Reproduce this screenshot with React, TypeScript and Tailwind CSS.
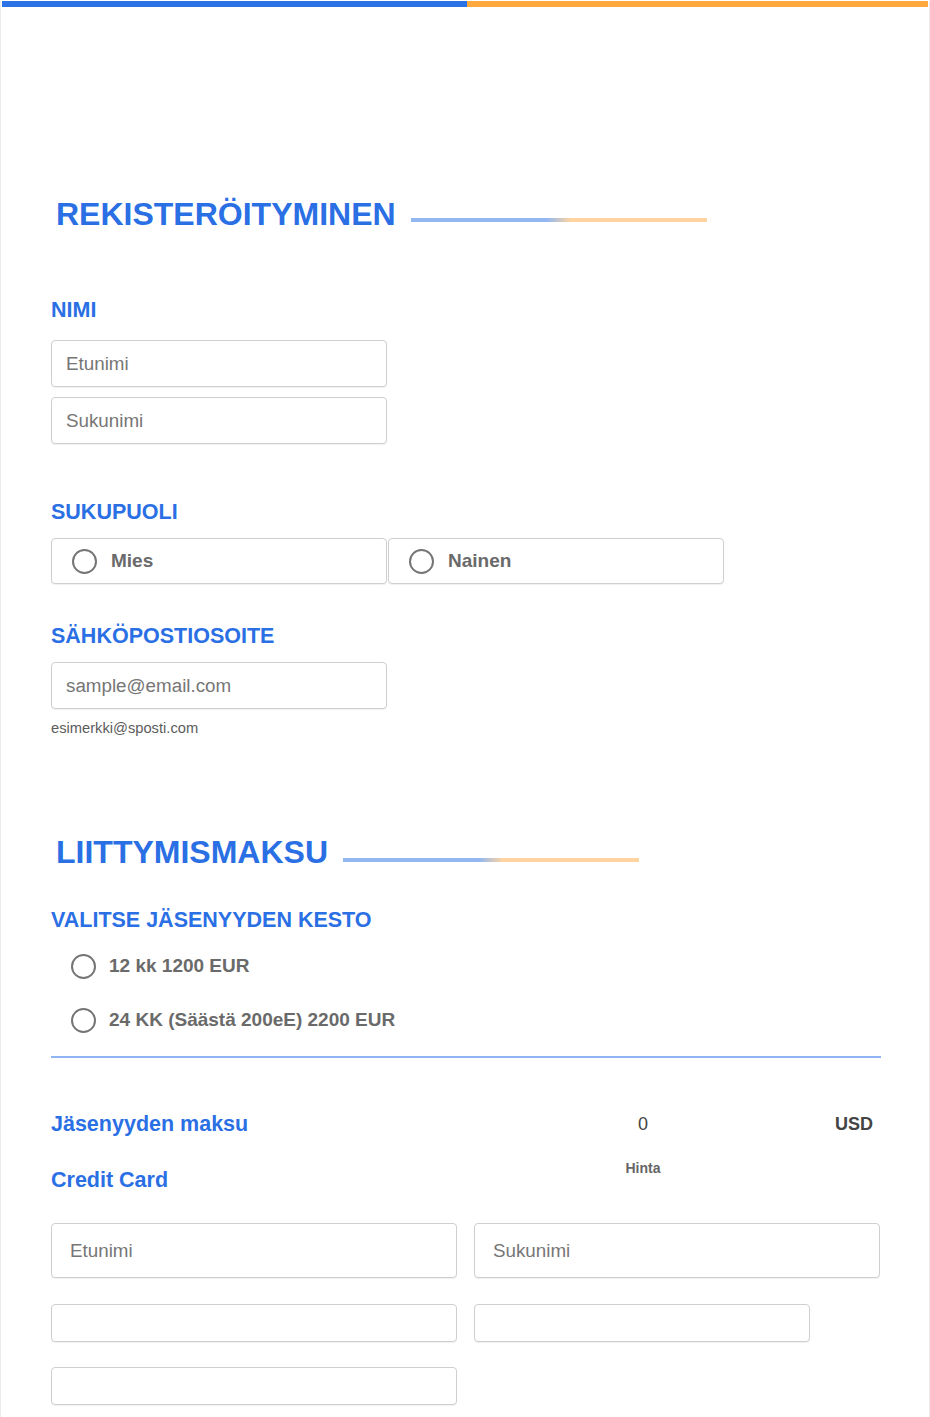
import React from 'react';

const blue = 'text-[#2a6fe4]';

function Label({ children, className = '' }: { children: React.ReactNode; className?: string }) {
  return <div className={`text-[21.5px] leading-[24px] font-bold ${blue} ${className}`}>{children}</div>;
}

function SectionTitle({ title, lineGap }: { title: string; lineGap: string }) {
  return (
    <div className="flex items-end pl-[5px]">
      <h2 className={`text-[32px] leading-[40px] font-bold ${blue}`}>{title}</h2>
      <div
        className={`ml-[15px] ${lineGap} h-[4px] w-[296px] bg-[linear-gradient(90deg,#93b8f1_0%,#93b8f1_46%,#ffd4a0_54%,#ffd4a0_100%)]`}
      />
    </div>
  );
}

function TextInput({ placeholder = '', className = '' }: { placeholder?: string; className?: string }) {
  return (
    <input
      placeholder={placeholder}
      className={`block rounded-[4px] border border-[#cfcfcf] bg-white px-[14px] text-[18.8px] text-[#555] placeholder:text-[#767676] shadow-[0_1px_1px_rgba(0,0,0,0.06)] outline-none ${className}`}
    />
  );
}

function Circle() {
  return <span className="block h-[25px] w-[25px] shrink-0 rounded-full border-2 border-[#757575] bg-white" />;
}

function GenderOption({ label }: { label: string }) {
  return (
    <div className="flex h-[46px] w-[336px] items-center rounded-[4px] border border-[#cfcfcf] bg-white pl-[20px] shadow-[0_1px_1px_rgba(0,0,0,0.06)]">
      <Circle />
      <span className="ml-[14px] text-[19px] font-bold text-[#6a6a6a]">{label}</span>
    </div>
  );
}

function PlanOption({ label }: { label: string }) {
  return (
    <div className="flex h-[30px] items-center pl-[20px]">
      <Circle />
      <span className="ml-[13px] text-[19px] font-bold text-[#6a6a6a]">{label}</span>
    </div>
  );
}

export default function App() {
  return (
    <div className="min-h-[1417px] w-[930px] border-x border-[#ececec] bg-white font-['Liberation_Sans',Arial,sans-serif]">
      <div className="mx-px mt-px flex h-[6px]">
        <div className="w-[465px] bg-[#2b72e6]" />
        <div className="flex-1 bg-[#ffa83d]" />
      </div>

      <div className="pl-[50px] pr-[49px]">
        <div className="mt-[187px]">
          <SectionTitle title="REKISTERÖITYMINEN" lineGap="mb-[12px]" />
        </div>

        <Label className="mt-[64px]">NIMI</Label>
        <TextInput placeholder="Etunimi" className="mt-[18px] h-[47px] w-[336px]" />
        <TextInput placeholder="Sukunimi" className="mt-[10px] h-[47px] w-[336px]" />

        <Label className="mt-[56px]">SUKUPUOLI</Label>
        <div className="mt-[14px] flex gap-[1px]">
          <GenderOption label="Mies" />
          <GenderOption label="Nainen" />
        </div>

        <Label className="mt-[40px]">SÄHKÖPOSTIOSOITE</Label>
        <TextInput placeholder="sample@email.com" className="mt-[14px] h-[47px] w-[336px]" />
        <div className="mt-[9px] text-[14.7px] leading-[20px] text-[#5c5c5c]">esimerkki@sposti.com</div>

        <div className="mt-[94px]">
          <SectionTitle title="LIITTYMISMAKSU" lineGap="mb-[10px]" />
        </div>

        <Label className="mt-[36px]">VALITSE JÄSENYYDEN KESTO</Label>
        <div className="mt-[19px] flex flex-col gap-[24px]">
          <PlanOption label="12 kk 1200 EUR" />
          <PlanOption label="24 KK (Säästä 200eE) 2200 EUR" />
        </div>

        <div className="mt-[21px] h-[2px] w-[830px] bg-[#8fb6f2]" />

        <div className="mt-[54px] flex">
          <div className="flex-1">
            <Label>Jäsenyyden maksu</Label>
            <Label className="mt-[32px]">Credit Card</Label>
          </div>
          <div className="w-[80px] text-center">
            <div className="text-[18px] leading-[24px] text-[#444]">0</div>
            <div className="mt-[22px] text-[14px] leading-[20px] font-bold text-[#666]">Hinta</div>
          </div>
          <div className="w-[197px] pr-[7px] text-right">
            <div className="text-[18px] leading-[24px] font-bold text-[#444]">USD</div>
          </div>
        </div>

        <div className="mt-[31px] flex gap-[17px]">
          <TextInput placeholder="Etunimi" className="h-[55px] w-[406px] px-[18px]" />
          <TextInput placeholder="Sukunimi" className="h-[55px] w-[406px] px-[18px]" />
        </div>
        <div className="mt-[26px] flex gap-[17px]">
          <TextInput className="h-[38px] w-[406px]" />
          <TextInput className="h-[38px] w-[336px]" />
        </div>
        <TextInput className="mt-[25px] h-[38px] w-[406px]" />
      </div>
    </div>
  );
}
